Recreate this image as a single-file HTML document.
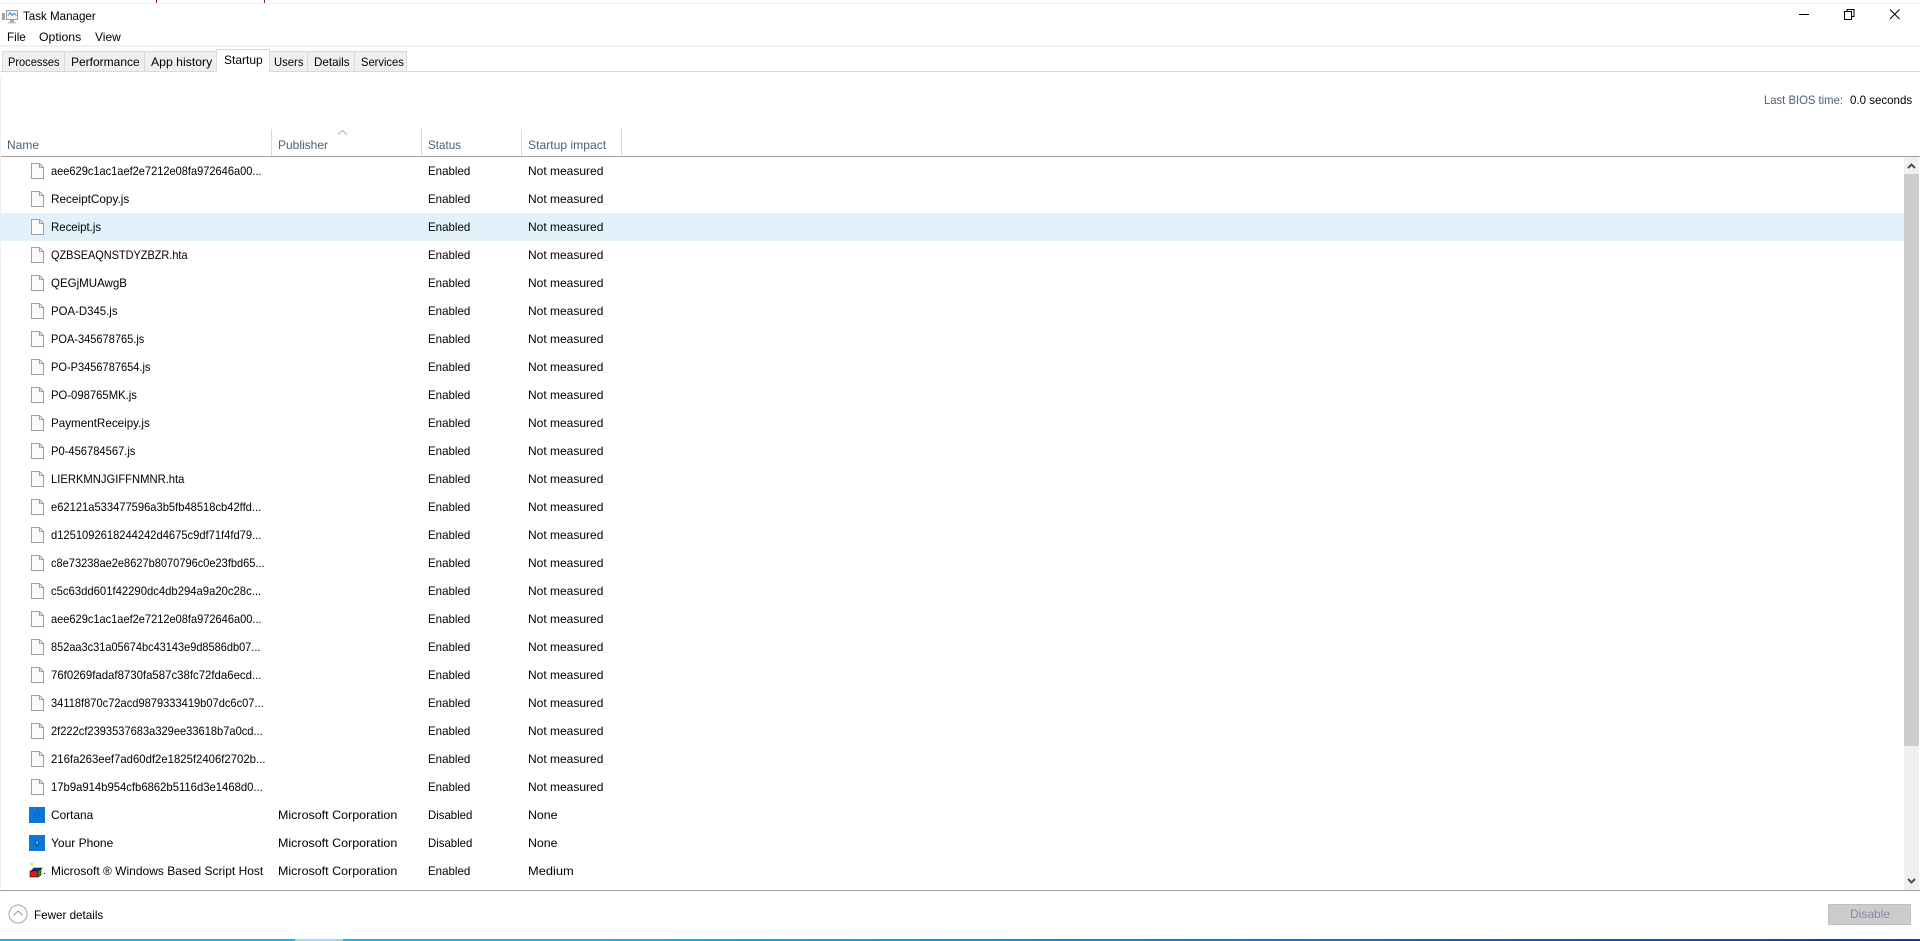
<!DOCTYPE html>
<html><head><meta charset="utf-8"><title>Task Manager</title>
<style>
html,body{margin:0;padding:0;background:#fff;width:1920px;height:941px;overflow:hidden}
body{font-family:"Liberation Sans",sans-serif;font-size:12px;color:#000;position:relative}
.a{position:absolute}
.t{position:absolute;white-space:nowrap;line-height:16px;transform:scaleX(.93);transform-origin:0 50%}
.tab{position:absolute;top:51px;height:20px;background:#f0f0f0;border:1px solid #d9d9d9;border-bottom:0;box-sizing:border-box}
.h{color:#4c607a}
.sep{position:absolute;top:129px;width:1px;height:27px;background:#d9d9d9}
#list{position:absolute;left:0;top:157px;width:1904px}
.r{position:relative;height:28px}
.r .t{top:6px}
.n{left:51px}.p{left:278px;transform:scaleX(1.04)}.s{left:428px;transform:scaleX(.96)}.i{left:528px;transform:scaleX(1)}
.r svg{position:absolute;left:31px;top:6px}
</style></head><body>
<svg width="0" height="0" style="position:absolute"><symbol id="f" viewBox="0 0 13 16"><path d="M.5.5h8l4 4v11H.5z" fill="#fbfbfb" stroke="#9f9f9f"/><path d="M8.500.5v4h4" fill="none" stroke="#9f9f9f"/></symbol></svg>

<div class="a" style="left:0;top:3px;width:1920px;height:1px;background:#efefef"></div>
<div class="a" style="left:156px;top:0;width:1px;height:3px;background:#7a1a6a"></div>
<div class="a" style="left:264px;top:0;width:1px;height:3px;background:#7a1a6a"></div>

<svg class="a" style="left:2px;top:9px" width="17" height="15" viewBox="0 0 17 15"><rect x="0" y="4" width="3" height="7" fill="#9aa79a"/><rect x="4.500" y="1.500" width="11" height="9" fill="#eef4fa" stroke="#9a9ea3"/><path d="M6 6.500l2-3 2 3 2-2 2.500 2" fill="none" stroke="#3a8ad6"/><rect x="8" y="11" width="4" height="2" fill="#a5a5a5"/><rect x="6" y="13" width="8" height="1.500" fill="#c0c0c0"/></svg>
<span class="t" style="left:23px;top:8px;transform:scaleX(.965)">Task Manager</span>
<span class="t" style="left:7px;top:29px;transform:scaleX(.97)">File</span>
<span class="t" style="left:39px;top:29px;transform:scaleX(1.02)">Options</span>
<span class="t" style="left:95px;top:29px;transform:scaleX(1)">View</span>

<svg class="a" style="left:1790px;top:5px" width="130" height="20" viewBox="0 0 130 20"><path d="M9 9.500h10" stroke="#000" fill="none"/><path d="M54.500 6.500h7v8h-7zM57 6.500V4.500h7v7h-2.500" stroke="#000" fill="none"/><path d="M100 4.500l9.500 9.500M109.500 4.500L100 14" stroke="#000" fill="none"/></svg>

<div class="a" style="left:0;top:45px;width:1920px;height:2px;background:#f0f0f0"></div>
<div class="a" style="left:0;top:71px;width:1920px;height:1px;background:#d9d9d9"></div>
<div class="tab" style="left:2px;width:63px"></div>
<div class="tab" style="left:64px;width:81px"></div>
<div class="tab" style="left:144px;width:73px"></div>
<div class="tab" style="left:216px;width:54px;top:49px;height:23px;background:#fff"></div>
<div class="tab" style="left:269px;width:39px"></div>
<div class="tab" style="left:307px;width:48px"></div>
<div class="tab" style="left:354px;width:53px"></div>
<span class="t" style="left:8px;top:54px;transform:scaleX(.92)">Processes</span>
<span class="t" style="left:71px;top:54px;transform:scaleX(1)">Performance</span>
<span class="t" style="left:151px;top:54px;transform:scaleX(1.02)">App history</span>
<span class="t" style="left:224px;top:52px;transform:scaleX(1)">Startup</span>
<span class="t" style="left:274px;top:54px;transform:scaleX(.94)">Users</span>
<span class="t" style="left:314px;top:54px;transform:scaleX(.97)">Details</span>
<span class="t" style="left:361px;top:54px;transform:scaleX(.93)">Services</span>

<span class="t h" style="left:1764px;top:92px;transform:scaleX(.94)">Last BIOS time:</span>
<span class="t" style="left:1850px;top:92px;transform:scaleX(.96)">0.0 seconds</span>

<span class="t h" style="left:7px;top:137px;transform:scaleX(1)">Name</span>
<span class="t h" style="left:278px;top:137px;transform:scaleX(1)">Publisher</span>
<span class="t h" style="left:428px;top:137px;transform:scaleX(.97)">Status</span>
<span class="t h" style="left:528px;top:137px;transform:scaleX(1.01)">Startup impact</span>
<div class="sep" style="left:271px"></div>
<div class="sep" style="left:421px"></div>
<div class="sep" style="left:521px"></div>
<div class="sep" style="left:621px"></div>
<svg class="a" style="left:337px;top:129px" width="11" height="7" viewBox="0 0 11 7"><path d="M1 5.500l4.500-4 4.500 4" fill="none" stroke="#a8adb3"/></svg>
<div class="a" style="left:0;top:156px;width:1920px;height:1px;background:#a0a0a0"></div>
<div class="a" style="left:0;top:77px;width:1px;height:813px;background:#f0f0f0"></div>

<div id="list">
<div class="r"><svg width="13" height="16"><use href="#f"/></svg><span class="t n" style="transform:scaleX(.92)">aee629c1ac1aef2e7212e08fa972646a00...</span><span class="t s">Enabled</span><span class="t i">Not measured</span></div>
<div class="r"><svg width="13" height="16"><use href="#f"/></svg><span class="t n" style="transform:scaleX(.98)">ReceiptCopy.js</span><span class="t s">Enabled</span><span class="t i">Not measured</span></div>
<div class="r" style="background:#e3f1fb"><svg width="13" height="16"><use href="#f"/></svg><span class="t n" style="transform:scaleX(.95)">Receipt.js</span><span class="t s">Enabled</span><span class="t i">Not measured</span></div>
<div class="r"><svg width="13" height="16"><use href="#f"/></svg><span class="t n" style="transform:scaleX(.91)">QZBSEAQNSTDYZBZR.hta</span><span class="t s">Enabled</span><span class="t i">Not measured</span></div>
<div class="r"><svg width="13" height="16"><use href="#f"/></svg><span class="t n" style="transform:scaleX(.96)">QEGjMUAwgB</span><span class="t s">Enabled</span><span class="t i">Not measured</span></div>
<div class="r"><svg width="13" height="16"><use href="#f"/></svg><span class="t n" style="transform:scaleX(.95)">POA-D345.js</span><span class="t s">Enabled</span><span class="t i">Not measured</span></div>
<div class="r"><svg width="13" height="16"><use href="#f"/></svg><span class="t n" style="transform:scaleX(.92)">POA-345678765.js</span><span class="t s">Enabled</span><span class="t i">Not measured</span></div>
<div class="r"><svg width="13" height="16"><use href="#f"/></svg><span class="t n" style="transform:scaleX(.92)">PO-P3456787654.js</span><span class="t s">Enabled</span><span class="t i">Not measured</span></div>
<div class="r"><svg width="13" height="16"><use href="#f"/></svg><span class="t n" style="transform:scaleX(.94)">PO-098765MK.js</span><span class="t s">Enabled</span><span class="t i">Not measured</span></div>
<div class="r"><svg width="13" height="16"><use href="#f"/></svg><span class="t n" style="transform:scaleX(.97)">PaymentReceipy.js</span><span class="t s">Enabled</span><span class="t i">Not measured</span></div>
<div class="r"><svg width="13" height="16"><use href="#f"/></svg><span class="t n" style="transform:scaleX(.93)">P0-456784567.js</span><span class="t s">Enabled</span><span class="t i">Not measured</span></div>
<div class="r"><svg width="13" height="16"><use href="#f"/></svg><span class="t n" style="transform:scaleX(.935)">LIERKMNJGIFFNMNR.hta</span><span class="t s">Enabled</span><span class="t i">Not measured</span></div>
<div class="r"><svg width="13" height="16"><use href="#f"/></svg><span class="t n" style="transform:scaleX(.93)">e62121a533477596a3b5fb48518cb42ffd...</span><span class="t s">Enabled</span><span class="t i">Not measured</span></div>
<div class="r"><svg width="13" height="16"><use href="#f"/></svg><span class="t n" style="transform:scaleX(.93)">d1251092618244242d4675c9df71f4fd79...</span><span class="t s">Enabled</span><span class="t i">Not measured</span></div>
<div class="r"><svg width="13" height="16"><use href="#f"/></svg><span class="t n" style="transform:scaleX(.92)">c8e73238ae2e8627b8070796c0e23fbd65...</span><span class="t s">Enabled</span><span class="t i">Not measured</span></div>
<div class="r"><svg width="13" height="16"><use href="#f"/></svg><span class="t n" style="transform:scaleX(.94)">c5c63dd601f42290dc4db294a9a20c28c...</span><span class="t s">Enabled</span><span class="t i">Not measured</span></div>
<div class="r"><svg width="13" height="16"><use href="#f"/></svg><span class="t n" style="transform:scaleX(.92)">aee629c1ac1aef2e7212e08fa972646a00...</span><span class="t s">Enabled</span><span class="t i">Not measured</span></div>
<div class="r"><svg width="13" height="16"><use href="#f"/></svg><span class="t n" style="transform:scaleX(.915)">852aa3c31a05674bc43143e9d8586db07...</span><span class="t s">Enabled</span><span class="t i">Not measured</span></div>
<div class="r"><svg width="13" height="16"><use href="#f"/></svg><span class="t n" style="transform:scaleX(.95)">76f0269fadaf8730fa587c38fc72fda6ecd...</span><span class="t s">Enabled</span><span class="t i">Not measured</span></div>
<div class="r"><svg width="13" height="16"><use href="#f"/></svg><span class="t n" style="transform:scaleX(.925)">34118f870c72acd9879333419b07dc6c07...</span><span class="t s">Enabled</span><span class="t i">Not measured</span></div>
<div class="r"><svg width="13" height="16"><use href="#f"/></svg><span class="t n" style="transform:scaleX(.925)">2f222cf2393537683a329ee33618b7a0cd...</span><span class="t s">Enabled</span><span class="t i">Not measured</span></div>
<div class="r"><svg width="13" height="16"><use href="#f"/></svg><span class="t n" style="transform:scaleX(.945)">216fa263eef7ad60df2e1825f2406f2702b...</span><span class="t s">Enabled</span><span class="t i">Not measured</span></div>
<div class="r"><svg width="13" height="16"><use href="#f"/></svg><span class="t n" style="transform:scaleX(.94)">17b9a914b954cfb6862b5116d3e1468d0...</span><span class="t s">Enabled</span><span class="t i">Not measured</span></div>
<div class="r"><svg style="left:29px" width="16" height="16"><rect width="16" height="16" fill="#0a78d8"/><circle cx="8" cy="8" r="2.500" fill="none" stroke="#0a62c0"/></svg><span class="t n" style="transform:scaleX(.99)">Cortana</span><span class="t p">Microsoft Corporation</span><span class="t s" style="transform:scaleX(.95)">Disabled</span><span class="t i" style="transform:scaleX(1.03)">None</span></div>
<div class="r"><svg style="left:29px" width="16" height="16"><rect width="16" height="16" fill="#0a78d8"/><rect x="6" y="5" width="4" height="6" fill="#0b5eaa"/><rect x="7" y="6" width="2" height="3" fill="#5cb0ea"/></svg><span class="t n" style="transform:scaleX(1)">Your Phone</span><span class="t p">Microsoft Corporation</span><span class="t s" style="transform:scaleX(.95)">Disabled</span><span class="t i" style="transform:scaleX(1.03)">None</span></div>
<div class="r"><svg style="left:29px;top:5px" width="17" height="17"><rect x="1.500" y="1" width="2.500" height="2.500" fill="#f2e60c"/><path d="M2 9l3-3h8l-3 3z" fill="#1a30a8" stroke="#111" stroke-width=".6"/><rect x="1" y="9" width="8" height="6" fill="#e8141c" stroke="#111" stroke-width=".6"/><path d="M9 9l3-2.500V13l-3 2z" fill="#18a018" stroke="#111" stroke-width=".6"/><rect x="15" y="11" width="1" height="1" fill="#111"/></svg><span class="t n" style="transform:scaleX(1)">Microsoft ® Windows Based Script Host</span><span class="t p">Microsoft Corporation</span><span class="t s">Enabled</span><span class="t i" style="transform:scaleX(1.07)">Medium</span></div>
</div>

<div class="a" style="left:1904px;top:157px;width:15px;height:733px;background:#f0f0f0"></div>
<div class="a" style="left:1904px;top:174px;width:15px;height:572px;background:#cdcdcd"></div>
<svg class="a" style="left:1904px;top:157px" width="15" height="733" viewBox="0 0 15 733"><path d="M4 11l3.500-3.500L11 11" fill="none" stroke="#505050" stroke-width="2"/><path d="M4 722l3.500 3.500L11 722" fill="none" stroke="#505050" stroke-width="2"/></svg>

<div class="a" style="left:0;top:890px;width:1920px;height:1px;background:#a0a0a0"></div>
<svg class="a" style="left:8px;top:904px" width="20" height="20" viewBox="0 0 20 20"><circle cx="10" cy="10" r="9" fill="#fff" stroke="#a5a5a5"/><path d="M5.500 11.500L10 7l4.500 4.500" fill="none" stroke="#a5a5a5" stroke-width="1.200"/></svg>
<span class="t" style="left:34px;top:907px;transform:scaleX(.97)">Fewer details</span>
<div class="a" style="left:1828px;top:904px;width:83px;height:21px;box-sizing:border-box;background:#ccc;border:1px solid #bfbfbf"></div>
<span class="t" style="left:1850px;top:906px;color:#8a8aa6;transform:scaleX(1)">Disable</span>

<div class="a" style="left:0;top:939px;width:1920px;height:2px;background:linear-gradient(90deg,#00b9ff 0,#00b9ff 600px,#0a3fae 1920px)"></div>
<div class="a" style="left:295px;top:939px;width:48px;height:2px;background:#8fdffb"></div>
</body></html>
